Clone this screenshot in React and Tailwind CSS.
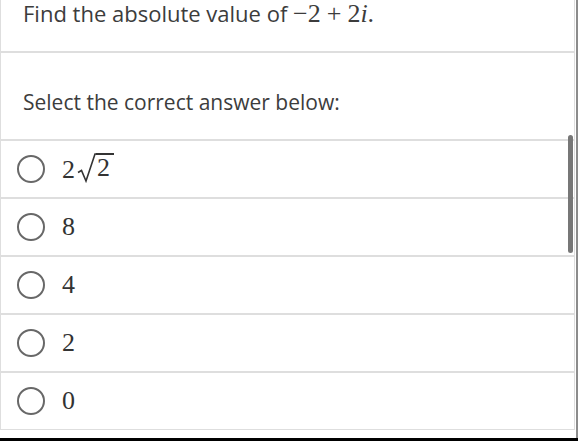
import React from 'react'

const sans = { fontFamily: '"Open Sans", "Noto Sans", sans-serif' }
const serif = { fontFamily: '"Liberation Serif", "DejaVu Serif", serif' }

function Radio() {
  return <span className="block w-[28px] h-[28px] rounded-full border-[2.5px] border-[#686868] shrink-0" />
}

function Sqrt2() {
  return (
    <span className="inline-flex items-end">
      <span className="leading-[26px] mr-[2px]">2</span>
      <svg width="19" height="30" viewBox="0 0 19 30" className="block">
        <path d="M1 19.5 L4.5 17.5 L9 28 L18 1 L19 1" fill="none" stroke="#333" strokeWidth="1.6" strokeLinejoin="miter" />
      </svg>
      <span className="border-t-2 border-[#333] leading-[26px] pr-[4px] pl-[1px] h-[30px]">2</span>
    </span>
  )
}

const options = [
  { key: 'a', content: <Sqrt2 /> },
  { key: 'b', content: '8' },
  { key: 'c', content: '4' },
  { key: 'd', content: '2' },
  { key: 'e', content: '0' },
]

export default function App() {
  return (
    <div className="w-[578px] h-[441px] bg-white overflow-hidden flex flex-col relative">
      <div className="flex h-[438px]">
        <div className="w-[575px] h-full flex flex-col text-[#3c3c3c]">
          <div className="h-[52px] border border-t-0 border-[#dedede] pl-[22px]">
            <p className="text-[22px] leading-[26px] whitespace-nowrap" style={sans}>
              Find the absolute value of{' '}
              <span className="text-[26px]" style={serif}>
                −2<span className="mx-[6px]">+</span>2<i>i</i>.
              </span>
            </p>
          </div>
          <div className="h-[88px] border border-[#dedede] pl-[22px] pt-[35px]">
            <p className="text-[21px] leading-[28px]" style={sans}>
              Select the correct answer below:
            </p>
          </div>
          {options.map((o) => (
            <label key={o.key} className="h-[58px] border border-[#dedede] flex items-center pl-[16px] gap-[17px]">
              <Radio />
              <span className="text-[26px] leading-[30px] text-[#333]" style={serif}>
                {o.content}
              </span>
            </label>
          ))}
        </div>
        <div className="w-px" />
        <div className="w-[2px] h-full bg-[#8c8c8c]" />
      </div>
      <div className="h-[3px] bg-black" />
      <div className="absolute left-[568px] top-[135px] w-[5px] h-[118px] rounded-full bg-[#777]" />
    </div>
  )
}
